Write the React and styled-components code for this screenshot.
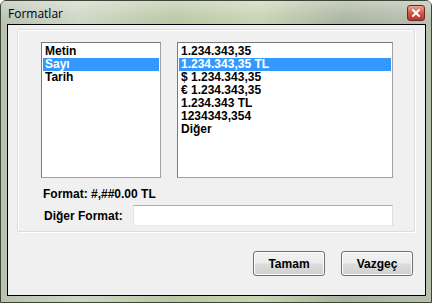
import React from "react"
import styled, { createGlobalStyle } from "styled-components"

const GlobalStyle = createGlobalStyle`
  html, body {
    margin: 0;
    padding: 0;
    background: #ffffff;
  }
`

const colours = {
  face: "#f0f0f0",
  select: "#3399ff",
  text: "#000000",
}

const Window = styled.div`
  width: 432px;
  height: 303px;
  box-sizing: border-box;
  display: flex;
  flex-direction: column;
  background: linear-gradient(
      90deg,
      #b9c1b2 0%,
      #cfd6c4 18%,
      #bac7a5 40%,
      #c9d3b3 60%,
      #a9b39e 80%,
      #b7bfae 100%
    );
  border: 1px solid #3c4536;
  border-radius: 6px 6px 0 0;
  font-family: "Liberation Sans", Arial, sans-serif;
`

const TitleBar = styled.div`
  height: 23px;
  display: flex;
  align-items: center;
  justify-content: space-between;
  padding: 0 6px 0 7px;
  background: linear-gradient(
    180deg,
    rgba(255, 255, 255, 0.35) 0%,
    rgba(255, 255, 255, 0.1) 60%,
    rgba(255, 255, 255, 0) 100%
  );
`

const Title = styled.span`
  font-family: "Open Sans", "Liberation Sans", sans-serif;
  font-size: 12px;
  color: #000;
  padding-top: 1px;
`

const CloseButton = styled.div`
  width: 16px;
  height: 14px;
  margin-top: 1px;
  border: 1px solid #6b2a22;
  border-radius: 3px;
  background: linear-gradient(180deg, #e6a395 0%, #d0584a 50%, #b8352b 100%);
  display: flex;
  align-items: center;
  justify-content: center;
`

const Client = styled.div`
  flex: 1;
  margin: 0 5px 6px 6px;
  border: 1px solid #000;
  background: ${colours.face};
  display: flex;
  flex-direction: column;
  padding: 4px 10px 0 9px;
`

const Group = styled.div`
  height: 203px;
  box-sizing: border-box;
  border: 1px solid #dcdcdc;
  box-shadow: inset 1px 1px 0 #ffffff, 1px 1px 0 #ffffff;
  border-radius: 2px;
  padding: 12px 0 0 23px;
  display: flex;
  flex-direction: column;
`

const Lists = styled.div`
  display: flex;
  gap: 16px;
`

const ListBox = styled.div`
  width: ${(p) => p.w}px;
  height: 136px;
  box-sizing: border-box;
  background: #fff;
  border: 1px solid #828790;
  border-color: #7a7a7a #a0a0a0 #a0a0a0 #7a7a7a;
  padding: 2px 1px;
`

const Item = styled.div`
  height: 13px;
  line-height: 13px;
  padding-left: 2px;
  font-size: 12px;
  font-weight: bold;
  color: ${(p) => (p.selected ? "#fff" : colours.text)};
  background: ${(p) => (p.selected ? colours.select : "transparent")};
  white-space: nowrap;
`

const FormatInfo = styled.div`
  margin-top: 9px;
  font-size: 12px;
  font-weight: bold;
  color: #000;
  padding-left: 2px;
`

const FieldRow = styled.div`
  display: flex;
  align-items: center;
  margin-top: 4px;
  padding-left: 3px;
`

const FieldLabel = styled.span`
  width: 89px;
  font-size: 12px;
  font-weight: bold;
  color: #000;
`

const TextInput = styled.div`
  width: 260px;
  height: 21px;
  box-sizing: border-box;
  background: #fff;
  border: 1px solid #abadb3;
  border-color: #abadb3 #dbdfe6 #e3e9ef #e2e3ea;
`

const Buttons = styled.div`
  display: flex;
  justify-content: flex-end;
  gap: 16px;
  margin-top: 19px;
  padding-right: 2px;
`

const Button = styled.div`
  width: 72px;
  height: 25px;
  box-sizing: border-box;
  border: 1px solid #707070;
  border-radius: 3px;
  background: linear-gradient(180deg, #f2f2f2 0%, #ebebeb 48%, #dddddd 52%, #cfcfcf 100%);
  box-shadow: inset 0 0 0 1px #fcfcfc;
  display: flex;
  align-items: center;
  justify-content: center;
  font-size: 12px;
  font-weight: bold;
  color: #000;
`

const types = ["Metin", "Sayı", "Tarih"]
const formats = [
  "1.234.343,35",
  "1.234.343,35 TL",
  "$ 1.234.343,35",
  "€ 1.234.343,35",
  "1.234.343 TL",
  "1234343,354",
  "Diğer",
]

const App = () => {
  return (
    <>
      <GlobalStyle />
      <Window>
        <TitleBar>
          <Title>Formatlar</Title>
          <CloseButton>
            <svg width="8" height="8" viewBox="0 0 8 8">
              <path d="M1 1 L7 7 M7 1 L1 7" stroke="#fff" strokeWidth="2" strokeLinecap="square" />
            </svg>
          </CloseButton>
        </TitleBar>
        <Client>
          <Group>
            <Lists>
              <ListBox w={120}>
                {types.map((t) => (
                  <Item key={t} selected={t === "Sayı"}>
                    {t}
                  </Item>
                ))}
              </ListBox>
              <ListBox w={216}>
                {formats.map((f, i) => (
                  <Item key={f} selected={i === 1}>
                    {f}
                  </Item>
                ))}
              </ListBox>
            </Lists>
            <FormatInfo>Format: #,##0.00 TL</FormatInfo>
            <FieldRow>
              <FieldLabel>Diğer Format:</FieldLabel>
              <TextInput />
            </FieldRow>
          </Group>
          <Buttons>
            <Button>Tamam</Button>
            <Button>Vazgeç</Button>
          </Buttons>
        </Client>
      </Window>
    </>
  )
}

export default App
